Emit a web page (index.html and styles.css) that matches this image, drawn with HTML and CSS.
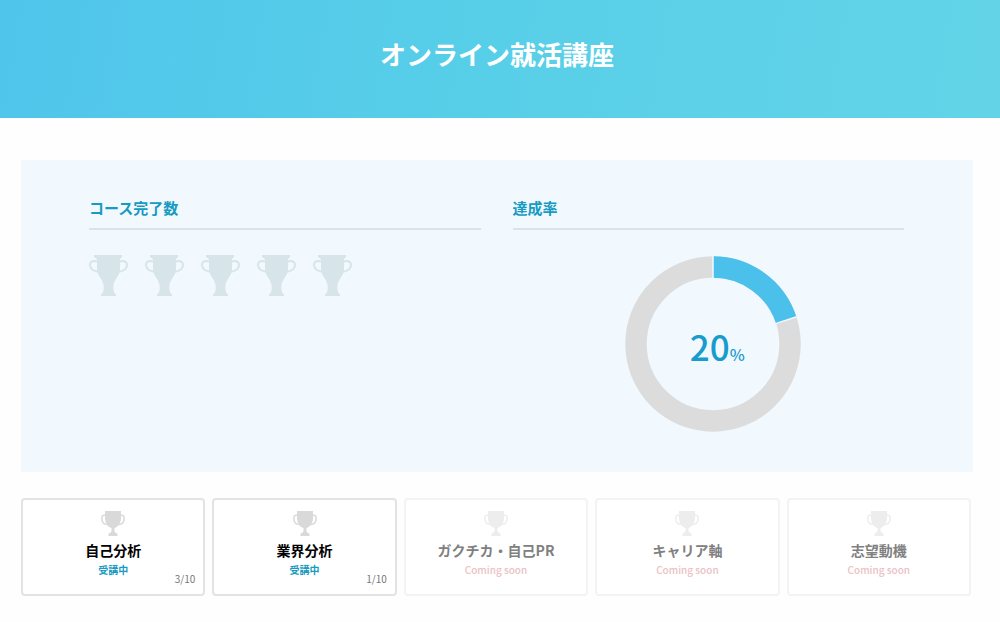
FILE: index.html
```html
<!DOCTYPE html>
<html lang="ja">
<head>
<meta charset="utf-8">
<meta name="viewport" content="width=device-width, initial-scale=1">
<title>オンライン就活講座</title>
<link rel="stylesheet" href="styles.css">
</head>
<body>
<svg class="symbols" aria-hidden="true">
  <symbol id="trophy" viewBox="0 0 39 42">
    <path d="M5 1H33V3L31 5V15C31 22 25 25 24.500 31C24 35 24.500 38 26 40H27V42H12V40H13C14.500 38 15 35 14.500 31C14 25 8 22 8 15V5L5 3Z" fill="currentColor"/>
    <path d="M8 7.500C3 6 1 8 1 11C1 15 5 17.500 10 18M31 7.500C36 6 38 8 38 11C38 15 34 17.500 29 18" fill="none" stroke="currentColor" stroke-width="2"/>
  </symbol>
  <symbol id="cup" viewBox="0 0 24 25">
    <path d="M4 0H20V7C20 12 17 16 13.500 17V20C13.500 21.500 16 22 16.500 23V25H7.500V23C8 22 10.500 21.500 10.500 20V17C7 16 4 12 4 7Z" fill="currentColor"/>
    <path d="M5 4.500C2 3.500 .8 5 .8 7.500C.8 11 3 13.500 7 13.500M19 4.500C22 3.500 23.200 5 23.200 7.500C23.200 11 21 13.500 17 13.500" fill="none" stroke="currentColor" stroke-width="1.500"/>
  </symbol>
</svg>

<header class="hero">
  <h1 class="hero-title">オンライン就活講座</h1>
</header>

<main class="page">
  <section class="summary">
    <div class="summary-col">
      <h2 class="summary-title">コース完了数</h2>
      <div class="trophies">
        <svg class="trophy"><use href="#trophy"/></svg>
        <svg class="trophy"><use href="#trophy"/></svg>
        <svg class="trophy"><use href="#trophy"/></svg>
        <svg class="trophy"><use href="#trophy"/></svg>
        <svg class="trophy"><use href="#trophy"/></svg>
      </div>
    </div>
    <div class="summary-col">
      <h2 class="summary-title">達成率</h2>
      <div class="chart">
        <svg class="donut" viewBox="-88 -88 176 176" aria-hidden="true">
          <circle r="77" fill="none" stroke="#dcdcdc" stroke-width="21.500"/>
          <path d="M0 -77A77 77 0 0 1 73.230 -23.790" fill="none" stroke="#4bc0eb" stroke-width="21.500"/>
          <path d="M0 -65V-88M61.820 -20.090L83.690 -27.190" stroke="#f1f9fe" stroke-width="1.500"/>
        </svg>
        <p class="rate">20<span class="rate-unit">%</span></p>
      </div>
    </div>
  </section>

  <section class="courses">
    <article class="course">
      <svg class="cup"><use href="#cup"/></svg>
      <h3 class="course-name">自己分析</h3>
      <p class="course-status">受講中</p>
      <p class="course-count">3/10</p>
    </article>
    <article class="course">
      <svg class="cup"><use href="#cup"/></svg>
      <h3 class="course-name">業界分析</h3>
      <p class="course-status">受講中</p>
      <p class="course-count">1/10</p>
    </article>
    <article class="course course-soon">
      <svg class="cup"><use href="#cup"/></svg>
      <h3 class="course-name">ガクチカ・自己PR</h3>
      <p class="course-status">Coming soon</p>
    </article>
    <article class="course course-soon">
      <svg class="cup"><use href="#cup"/></svg>
      <h3 class="course-name">キャリア軸</h3>
      <p class="course-status">Coming soon</p>
    </article>
    <article class="course course-soon">
      <svg class="cup"><use href="#cup"/></svg>
      <h3 class="course-name">志望動機</h3>
      <p class="course-status">Coming soon</p>
    </article>
  </section>
</main>
</body>
</html>
```
FILE: styles.css
```css
* {
  box-sizing: border-box;
}

body,
h1,
h2,
h3,
p {
  margin: 0;
}

body {
  background: #fefefe;
  color: #000;
  font-family: "Noto Sans CJK JP", sans-serif;
}

.symbols {
  position: absolute;
  width: 0;
  height: 0;
}

.hero {
  padding: 34px 27px 44px 21px;
  background: linear-gradient(100deg, #50c5ec 0%, #58cfe8 50%, #63d4e8 100%);
  text-align: center;
}

.hero-title {
  color: #fff;
  font-size: 26px;
  font-weight: 700;
  line-height: 40px;
}

.page {
  padding: 42px 27px 24px 21px;
}

.summary {
  display: grid;
  grid-template-columns: 1fr 1fr;
  gap: 32px;
  padding: 36px 69px 40px 68px;
  background: #f1f9fe;
}

.summary-title {
  padding-bottom: 8px;
  border-bottom: 2px solid #dae3e5;
  color: #179bc1;
  font-size: 15px;
  font-weight: 700;
  line-height: 24px;
}

.trophies {
  display: flex;
  gap: 17px;
  margin-top: 24px;
}

.trophy {
  width: 39px;
  height: 42px;
  color: #d7e4ea;
}

.chart {
  display: grid;
  place-items: center;
  margin: 26px 10px 0 20px;
}

.donut,
.rate {
  grid-area: 1 / 1;
}

.donut {
  width: 176px;
  height: 176px;
}

.rate {
  padding: 12px 0 0 8px;
  color: #189bcd;
  font-size: 35px;
  font-weight: 500;
  line-height: 40px;
}

.rate-unit {
  font-size: 16px;
}

.courses {
  display: grid;
  grid-template-columns: repeat(5, 1fr);
  gap: 7px;
  margin-top: 26px;
  padding-right: 2px;
}

.course {
  display: grid;
  grid-template-rows: 25px 24px 16px 16px;
  justify-items: center;
  padding: 11px 8px 2px;
  border: 2px solid #e3e3e3;
  border-radius: 4px;
  background: #fff;
}

.cup {
  width: 24px;
  height: 25px;
  color: #d9d9d9;
}

.course-name {
  font-size: 14px;
  font-weight: 700;
  line-height: 28px;
}

.course-status {
  color: #179bc1;
  font-size: 10px;
  font-weight: 700;
  line-height: 20px;
}

.course-count {
  justify-self: end;
  color: #777;
  font-size: 10px;
  line-height: 6px;
}

.course-soon {
  border-color: #f3f3f3;
}

.course-soon .cup {
  color: #ededed;
}

.course-soon .course-name {
  color: #808080;
}

.course-soon .course-status {
  color: #ebc1c3;
  font-weight: 500;
}
```
